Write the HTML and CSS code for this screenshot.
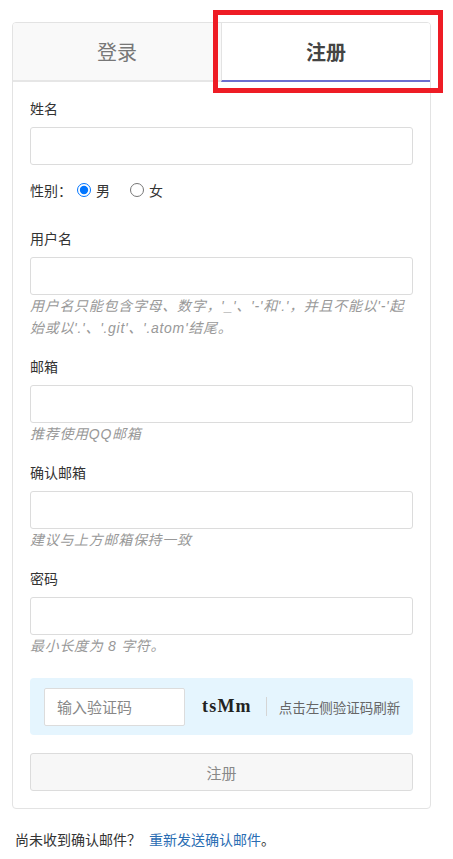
FILE: index.html
```html
<!DOCTYPE html>
<html lang="zh-CN">
<head>
<meta charset="utf-8">
<title>注册</title>
<link rel="stylesheet" href="styles.css">
</head>
<body>
<div class="page">
  <div class="card">
    <div class="tabs">
      <div class="tab">登录</div>
      <div class="tab active">注册</div>
    </div>
    <form class="card-body">
      <div class="group">
        <label class="label">姓名</label>
        <input class="input" type="text">
      </div>
      <div class="gender">
        <span>性别：</span>
        <label class="radio"><input type="radio" name="sex" checked>男</label>
        <label class="radio"><input type="radio" name="sex">女</label>
      </div>
      <div class="group">
        <label class="label">用户名</label>
        <input class="input" type="text">
        <p class="help">用户名只能包含字母、数字，'_'、'-'和'.'，并且不能以'-'起始或以'.'、'.git'、'.atom'结尾。</p>
      </div>
      <div class="group">
        <label class="label">邮箱</label>
        <input class="input" type="text">
        <p class="help">推荐使用QQ邮箱</p>
      </div>
      <div class="group">
        <label class="label">确认邮箱</label>
        <input class="input" type="text">
        <p class="help">建议与上方邮箱保持一致</p>
      </div>
      <div class="group">
        <label class="label">密码</label>
        <input class="input" type="password">
        <p class="help">最小长度为 8 字符。</p>
      </div>
      <div class="captcha">
        <input class="captcha-input" type="text" placeholder="输入验证码">
        <span class="captcha-code">tsMm</span>
        <span class="captcha-sep"></span>
        <span class="captcha-tip">点击左侧验证码刷新</span>
      </div>
      <button class="submit" type="button">注册</button>
    </form>
  </div>
  <p class="footer">尚未收到确认邮件？<a class="link" href="#">重新发送确认邮件</a>。</p>
  <div class="highlight"></div>
</div>
</body>
</html>
```

FILE: styles.css
```css
* { box-sizing: border-box; }
html, body { margin: 0; padding: 0; background: #fff; }
body {
  font-family: "Noto Sans CJK SC", "Liberation Sans", sans-serif;
  font-size: 14px;
  color: #333;
}
.page {
  position: relative;
  padding: 22px 22px 0 12px;
}
.card {
  border: 1px solid #e3e3e3;
  border-radius: 4px;
  width: 419px;
  overflow: hidden;
}
.tabs {
  display: flex;
  background: #f9f9f9;
}
.tab {
  flex: 1;
  height: 59px;
  display: flex;
  align-items: center;
  justify-content: center;
  font-size: 20px;
  color: #777;
  border-bottom: 2px solid #e6e6e6;
}
.tab.active {
  background: #fff;
  color: #444;
  font-weight: bold;
  border-left: 1px solid #e3e3e3;
  border-bottom: 2px solid #6c6fcf;
}
.card-body {
  display: flex;
  flex-direction: column;
  padding: 16px 17px 17px 17px;
  margin: 0;
}
.group {
  display: flex;
  flex-direction: column;
  margin-bottom: 17px;
}
.label {
  line-height: 20px;
  margin-bottom: 9px;
  color: #333;
}
.input {
  height: 38px;
  border: 1px solid #dcdcdc;
  border-radius: 3px;
  background: #fff;
  padding: 0 10px;
  font: inherit;
  outline: none;
}
.help {
  margin: 0;
  line-height: 22px;
  color: #999;
  font-style: italic;
  letter-spacing: 0.7px;
  font-family: "Liberation Sans", "Noto Sans CJK SC", sans-serif;
}
.group:first-child { margin-bottom: 0; }
.gender {
  display: flex;
  align-items: center;
  line-height: 20px;
  margin: 15px 0 28px;
}
.radio {
  display: inline-flex;
  align-items: center;
  margin-right: 15px;
}
.radio input {
  margin: 0 5px 0 5px;
  width: 14px;
  height: 14px;
}
.captcha {
  margin-top: 4px;
  display: flex;
  align-items: center;
  background: #e5f5fe;
  border-radius: 4px;
  padding: 9px 10px 9px 14px;
  height: 57px;
  white-space: nowrap;
}
.captcha > * { flex-shrink: 0; }
.captcha-input {
  width: 141px;
  height: 38px;
  border: 1px solid #dcdcdc;
  border-radius: 2px;
  background: #fff;
  padding: 0 12px;
  font: inherit;
  font-size: 15px;
  outline: none;
}
.captcha-input::placeholder { color: #888; }
.captcha-code {
  margin-left: 17px;
  font-family: "Liberation Serif", serif;
  font-weight: bold;
  font-size: 18px;
  color: #222;
  letter-spacing: 1.2px;
}
.captcha-sep {
  width: 1px;
  height: 19px;
  background: #d5d5d5;
  margin: 0 12px 0 14px;
}
.captcha-tip {
  font-size: 13.5px;
  color: #666;
}
.submit {
  margin-top: 18px;
  height: 38px;
  border: 1px solid #dcdcdc;
  border-radius: 3px;
  background: #f7f7f7;
  color: #888;
  font: inherit;
  font-size: 15px;
}
.footer {
  margin: 20px 0 0 3px;
  line-height: 20px;
  color: #333;
}
.link {
  color: #2a6db3;
  text-decoration: none;
  margin-left: 8px;
}
.highlight {
  position: absolute;
  left: 213px;
  top: 10px;
  width: 230px;
  height: 83px;
  border: 5px solid #ee1c25;
  pointer-events: none;
}
```
